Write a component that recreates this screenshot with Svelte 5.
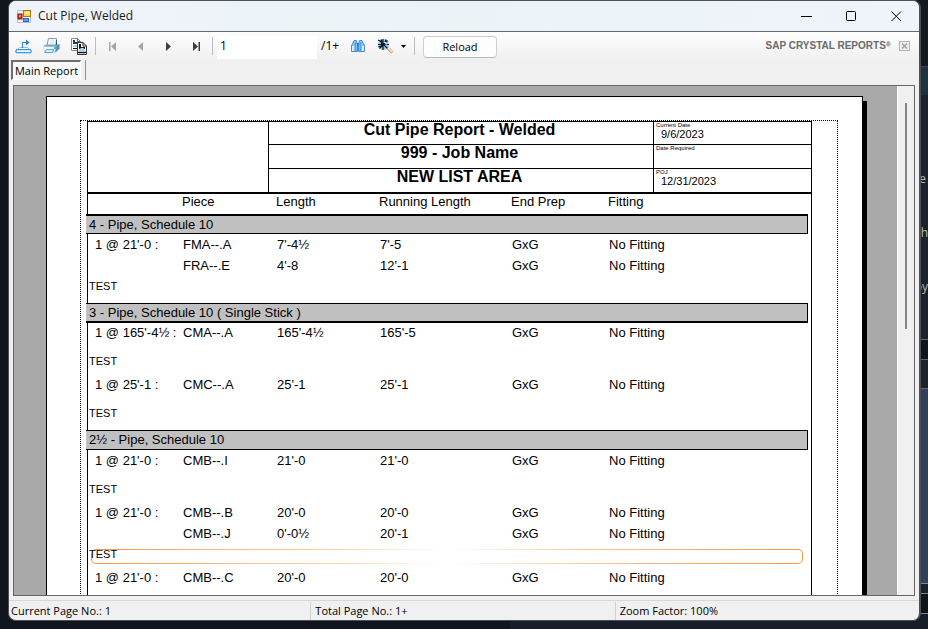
<script>
  const pipe = (piece, length, running) => ({ piece, length, running, prep: 'GxG', fitting: 'No Fitting' });

  const groups = [
    {
      title: '4 - Pipe, Schedule 10',
      rule: 'heavy-top',
      batches: [
        { qty: "1 @ 21'-0 :", rows: [pipe('FMA--.A', "7'-4½", "7'-5"), pipe('FRA--.E', "4'-8", "12'-1")], note: 'TEST' }
      ]
    },
    {
      title: '3 - Pipe, Schedule 10 ( Single Stick )',
      rule: 'heavy-bottom',
      batches: [
        { qty: "1 @ 165'-4½ :", rows: [pipe('CMA--.A', "165'-4½", "165'-5")], note: 'TEST' },
        { qty: "1 @ 25'-1 :", rows: [pipe('CMC--.A', "25'-1", "25'-1")], note: 'TEST' }
      ]
    },
    {
      title: '2½ - Pipe, Schedule 10',
      rule: '',
      batches: [
        { qty: "1 @ 21'-0 :", rows: [pipe('CMB--.I', "21'-0", "21'-0")], note: 'TEST' },
        {
          qty: "1 @ 21'-0 :",
          rows: [pipe('CMB--.B', "20'-0", "20'-0"), pipe('CMB--.J', "0'-0½", "20'-1")],
          note: 'TEST',
          selected: true
        },
        { qty: "1 @ 21'-0 :", rows: [pipe('CMB--.C', "20'-0", "20'-0")] }
      ]
    }
  ];

  let pageNumber = $state('1');
</script>

<div class="desktop">
  <div class="behind">
    <div class="b1"></div>
    <div class="b2"></div>
    <div class="b3"><span>e</span><span>th</span><span>by</span></div>
    <div class="b4"></div>
    <div class="b5"></div>
    <div class="b6"></div>
    <div class="b7"></div>
    <div class="b8"></div>
  </div>

  <main class="window">
    <header class="titlebar">
      <svg class="app-icon" width="15" height="15" viewBox="0 0 15 15">
        <rect x="0.5" y="1.5" width="13" height="12" fill="#eef1f5" stroke="#b9c0c8" />
        <rect x="1" y="5" width="4" height="5" fill="#c8321f" stroke="#8c1d12" stroke-width="1" />
        <rect x="2" y="6" width="2" height="2" fill="#f08a70" />
        <rect x="6.5" y="1.5" width="7" height="6" fill="#fbd44c" stroke="#a87a12" />
        <rect x="8" y="3" width="4" height="2" fill="#fff0a8" />
        <rect x="6.5" y="9.5" width="5" height="3" fill="#5b9cf0" stroke="#2f67c4" />
      </svg>
      <h1>Cut Pipe, Welded</h1>
      <div class="caption">
        <button aria-label="Minimize"><svg width="11" height="11" viewBox="0 0 11 11"><path d="M0 5.5H11" /></svg></button>
        <button aria-label="Maximize"><svg width="11" height="11" viewBox="0 0 11 11"><rect x="0.5" y="0.5" width="9" height="9" rx="1" /></svg></button>
        <button aria-label="Close"><svg width="11" height="11" viewBox="0 0 11 11"><path d="M0.5 0.5L10 10M10 0.5L0.5 10" /></svg></button>
      </div>
    </header>

    <div class="toolbar">
      <button class="tool" aria-label="Export report">
        <svg width="17" height="15" viewBox="0 0 17 15">
          <path d="M4.500 8.500H12.500L15.500 11.500H1.500Z" fill="#fff" stroke="#8fc4f2" />
          <path d="M1.500 10.700H15.500L16.300 12.500L15.500 13.700H1.500L0.700 12.500Z" fill="#fff" stroke="#3399f3" stroke-width="1.200" />
          <path d="M7.500 9V3.500H11" fill="none" stroke="#3a7fb5" />
          <path d="M11 0.500L14.500 3.500L11 6.500Z" fill="#2f7fc4" />
        </svg>
      </button>
      <button class="tool" aria-label="Print report">
        <svg width="17" height="16" viewBox="0 0 17 16">
          <path d="M0.500 8L4 5.500H13L16.500 6V11L12.500 14.500H2.500L0.500 12Z" fill="#b9d0ee" />
          <path d="M5.500 0.500H13.500L13 7H4Z" fill="#f4fbff" stroke="#7b9fae" />
          <path d="M7.500 3H11.500M7 5H11" stroke="#c9e6f0" />
          <path d="M13.500 2V7" stroke="#36576a" />
          <path d="M1 8.500H12.500V12.500H1Z" fill="#f0f6fd" />
          <path d="M12.500 8L16.500 6V10.500L12.500 14.500Z" fill="#5d8bc6" />
          <path d="M3.500 11.500H10.500L9.500 14.500H1.500Z" fill="#c8f4fb" stroke="#6b9fd0" />
          <rect x="11" y="9" width="3" height="2" fill="#35b9c4" />
          <path d="M1 8H13" stroke="#6c8fb9" />
        </svg>
      </button>
      <button class="tool" aria-label="Copy">
        <svg width="17" height="17" viewBox="0 0 17 17">
          <path d="M0.500 0.500H6.500L9.500 3.500V12.500H0.500Z" fill="#fff" stroke="#888" />
          <path d="M6.500 0.500V3.500H9.500" fill="none" stroke="#666" />
          <path d="M2 2H4V4H8V6H2Z" fill="#2a3a48" />
          <rect x="2" y="7" width="5" height="2" fill="#9fd6ee" />
          <path d="M2 10.500H7" stroke="#111" />
          <path d="M6.500 4.500H12L15.500 8V16.500H6.500Z" fill="#fff" stroke="#333" />
          <path d="M12 4.500V8H15.500" fill="none" stroke="#222" />
          <path d="M8 6H10V9H14V11L11 10L8 11Z" fill="#14191f" />
          <rect x="8" y="11" width="6" height="2" fill="#a4d8ee" />
          <path d="M7 14.500H15" stroke="#111" stroke-width="1.500" />
        </svg>
      </button>
      <i class="sep"></i>
      <button class="tool off" aria-label="First page"><svg width="9" height="9" viewBox="0 0 9 9"><path d="M1 0H2.500V9H1ZM8 0V9L3 4.500Z" /></svg></button>
      <button class="tool off" aria-label="Previous page"><svg width="9" height="9" viewBox="0 0 9 9"><path d="M7 0V9L2 4.500Z" /></svg></button>
      <button class="tool" aria-label="Next page"><svg width="9" height="9" viewBox="0 0 9 9"><path d="M2 0V9L7 4.500Z" /></svg></button>
      <button class="tool" aria-label="Last page"><svg width="9" height="9" viewBox="0 0 9 9"><path d="M6.500 0H8V9H6.500ZM1 0V9L6 4.500Z" /></svg></button>
      <i class="sep"></i>
      <input class="page-no" aria-label="Page number" bind:value={pageNumber} />
      <span class="page-total">/1+</span>
      <button class="tool" aria-label="Find text">
        <svg width="14" height="12" viewBox="0 0 14 12">
          <path d="M3 0.500H5.500L6.500 5V11.500H0.500V6Z" fill="#8cc8f7" stroke="#3f8bd4" />
          <path d="M8.500 0.500H11L13.500 6V11.500H7.500V5Z" fill="#8cc8f7" stroke="#3f8bd4" />
          <rect x="1" y="6" width="2" height="5" fill="#f1ecd0" />
          <rect x="11" y="6" width="2" height="5" fill="#f1ecd0" />
          <path d="M4.500 2V11M9.500 2V11" stroke="#4ea3f2" stroke-width="1.500" />
          <rect x="6" y="3" width="2" height="3" fill="#2b7bd0" />
        </svg>
      </button>
      <button class="tool zoom" aria-label="Zoom">
        <svg width="16" height="15" viewBox="0 0 16 15">
          <circle cx="5.500" cy="5.500" r="5.500" fill="#8fd2f5" />
          <path d="M0 1L2 2M5 0V11M0 5.500H11M1.500 1.500L10 10M9.500 1.500L1.500 9.500M3 0.500L4 3M8 0.500L7 3M0.500 8L3 7" stroke="#0c1824" stroke-width="1.200" />
          <rect x="3" y="4" width="4" height="3" fill="#0c1824" />
          <path d="M6 3.500H8V6" stroke="#dff4ff" fill="none" />
          <path d="M9.500 9L14.500 13.500" stroke="#c48f5c" stroke-width="3" />
          <path d="M10 9L14.500 13" stroke="#f9dcb4" stroke-width="1.800" />
        </svg>
        <svg class="caret" width="5" height="3" viewBox="0 0 5 3"><path d="M0 0H5L2.500 3Z" /></svg>
      </button>
      <i class="sep"></i>
      <button class="reload">Reload</button>
      <span class="brand">SAP CRYSTAL REPORTS<sup>®</sup></span>
      <button class="close-view" aria-label="Close view">
        <svg width="11" height="10" viewBox="0 0 11 10">
          <rect x="0.500" y="0.500" width="10" height="9" fill="#ededed" stroke="#b4b4b4" />
          <path d="M3 2.500L8 7.500M8 2.500L3 7.500" stroke="#a2a2a2" stroke-width="1.500" />
        </svg>
      </button>
    </div>

    <nav class="tabs"><button class="tab">Main Report</button></nav>

    <div class="viewer">
      <div class="canvas">
        <article class="paper">
          <div class="margins">
            <div class="frame">
              <div class="heading">
                <div class="logo"></div>
                <div class="titles">
                  <h2>Cut Pipe Report - Welded</h2>
                  <h2>999 - Job Name</h2>
                  <h2>NEW LIST AREA</h2>
                </div>
                <dl class="dates">
                  <div><dt>Current Date</dt><dd>9/6/2023</dd></div>
                  <div><dt>Date Required</dt><dd></dd></div>
                  <div><dt>POJ</dt><dd>12/31/2023</dd></div>
                </dl>
              </div>

              <table>
                <colgroup>
                  <col class="c-qty" /><col class="c-piece" /><col class="c-length" />
                  <col class="c-running" /><col class="c-prep" /><col />
                </colgroup>
                <thead>
                  <tr><th></th><th>Piece</th><th>Length</th><th>Running Length</th><th>End Prep</th><th>Fitting</th></tr>
                </thead>
                {#each groups as group}
                  <tbody>
                    <tr><td class="full" colspan="6"><div class="band {group.rule}">{group.title}</div></td></tr>
                    {#each group.batches as batch}
                      {#each batch.rows as row, i}
                        <tr class="item">
                          <td class="qty">{i === 0 ? batch.qty : ''}</td>
                          <td>{row.piece}</td>
                          <td>{row.length}</td>
                          <td>{row.running}</td>
                          <td>{row.prep}</td>
                          <td>{row.fitting}</td>
                        </tr>
                      {/each}
                      {#if batch.note}
                        <tr>
                          <td class="full" colspan="6">
                            <div class="note" class:single={batch.rows.length === 1}>
                              {#if batch.selected}<i class="selection"></i>{/if}
                              <span>{batch.note}</span>
                            </div>
                          </td>
                        </tr>
                      {/if}
                    {/each}
                    <tr><td class="full" colspan="6"><div class="gap"></div></td></tr>
                  </tbody>
                {/each}
              </table>
            </div>
          </div>
        </article>
      </div>
      <div class="scrollbar"><div class="thumb"></div></div>
    </div>

    <footer class="status">
      <span>Current Page No.: 1</span>
      <span>Total Page No.: 1+</span>
      <span>Zoom Factor: 100%</span>
    </footer>
  </main>
</div>

<style>
  :global(body) { background: #12161e; }
  * { box-sizing: border-box; }
  button { font: inherit; color: inherit; background: none; border: 0; padding: 0; }
  svg { display: block; }
  h1, h2, dl, dd { margin: 0; font-weight: inherit; }

  .desktop {
    position: relative;
    display: flex;
    height: 100vh;
    padding: 0 7px 8px 8px;
    overflow: hidden;
    background: linear-gradient(90deg, #11151d 55%, #171e29 55%);
    font: 12px/16px "Open Sans", "Noto Sans", sans-serif;
    color: #000;
  }

  /* Slice of the application that shows past the window's right edge */
  .behind {
    position: absolute;
    inset: 0 0 0 auto;
    width: 12px;
    display: flex;
    flex-direction: column;
  }
  .b1 { height: 66px; background: #14181f; }
  .b2 { height: 29px; background: #1c3341; border-top: 1px solid #39434d; }
  .b3 { height: 244px; background: #1b222c; color: #b9b9b4; padding-top: 76px; overflow: hidden; }
  .b3 span { display: flex; justify-content: flex-end; height: 54px; padding-right: 2px; }
  .b3 span:not(:first-child) { padding-right: 0; }
  .b4 { height: 20px; background: #11151b; border-top: 1px solid #5b6675; }
  .b5 { height: 29px; background: #1b222a; border-top: 1px solid #5b6675; }
  .b6 { height: 195px; background: #31415a; border-top: 1px solid #5b6675; }
  .b7 { height: 10px; background: #1a212b; border-top: 1px solid #7a8698; }
  .b8 { height: 21px; background: #101318; border: solid #7a8698; border-width: 1px 0; }

  .window {
    position: relative;
    flex: 1;
    min-width: 0;
    display: flex;
    flex-direction: column;
    border: 1px solid #4c4f55;
    border-right-width: 2px;
    border-radius: 8px;
    background: #f0f0f0;
    overflow: hidden;
  }

  .titlebar {
    display: flex;
    align-items: center;
    height: 31px;
    flex: none;
    padding-left: 8px;
    background: linear-gradient(90deg, #eff3f9, #eaf4f7 50%, #eff3fa);
    border-bottom: 1px solid #666a6e;
  }
  .titlebar h1 { margin-left: 6px; font-size: 12px; color: #1a1a1a; }
  .caption { display: flex; margin-left: auto; }
  .caption button { width: 45px; height: 30px; display: grid; place-items: center; }
  .caption svg { fill: none; stroke: #000; }

  .toolbar {
    display: flex;
    align-items: center;
    height: 28px;
    flex: none;
    padding: 0 9px 0 0;
    background: linear-gradient(#fdfdfd, #f0f0f0);
  }
  .tool { width: 28px; height: 28px; display: grid; place-items: center; flex: none; fill: #3d3d3d; }
  .tool.off { fill: #a6a6a6; }
  .sep { width: 1px; height: 18px; background: #bdbdbd; margin: 0 2px; }
  .page-no {
    width: 100px;
    height: 23px;
    margin: 2px 4px 0 2px;
    padding: 0 3px 3px;
    border: 0;
    background: #fff;
    font: inherit;
  }
  .page-total { width: 23px; }
  .tool.zoom { display: flex; align-items: center; width: 40px; gap: 7px; padding-left: 6px; }
  .caret { fill: #000; }
  .reload {
    width: 74px;
    height: 22px;
    margin: 2px 0 0 6px;
    border: 1px solid #cfcfcf;
    border-bottom-color: #b8b8b8;
    border-radius: 4px;
    background: #fdfdfd;
    font-size: 11px;
  }
  .brand { margin-left: auto; font: bold 10px/16px "Liberation Sans", Arial, sans-serif; color: #6b6b6b; white-space: nowrap; }
  .brand sup { font-size: 7px; line-height: 0; vertical-align: 2px; }
  .close-view { margin-left: 8px; }

  .tabs { display: flex; align-items: flex-start; height: 25px; flex: none; padding-left: 2px; }
  .tab {
    width: 70px;
    height: 20px;
    border: 1px solid #fff;
    border-top: 2px solid #6f6f6f;
    border-left: 2px solid #6f6f6f;
    background: #f8f8f8;
    font-size: 11px;
    white-space: nowrap;
  }
  .tabs::after { content: ''; width: 1px; height: 20px; margin-left: 4px; background: #8f8f8f; }

  .viewer {
    display: flex;
    flex: 1;
    min-height: 0;
    margin: 0 4px 4px;
    border: 1px solid #666;
  }
  .canvas { flex: 1; min-width: 0; padding: 10px 34px 0 32px; overflow: hidden; background: #a9a9a9; }
  .paper { border: 1px solid #000; background: #fff; box-shadow: 4px 5px #000; padding: 23px 24px 48px 33px; min-height: 1056px; }
  .margins { border: 1px dotted #000; padding: 0 25px 0 6px; min-height: 980px; }
  .frame { border: 1px solid #000; min-height: 900px; font-family: "Liberation Sans", Arial, sans-serif; }

  .heading { display: flex; border-bottom: 2px solid #000; margin: 0 -1px; padding: 0 1px; }
  .logo { width: 180px; }
  .titles { flex: 1; border-left: 1px solid #000; border-right: 1px solid #000; }
  .titles h2 { height: 23px; padding-right: 3px; font: bold 16px/16px "Liberation Sans", Arial, sans-serif; text-align: center; }
  .titles h2:nth-child(2), .dates div:nth-child(2) { height: 24px; }
  .titles h2:not(:last-child), .dates div:not(:last-child) { border-bottom: 1px solid #000; }
  .dates { width: 157px; }
  .dates div { height: 23px; padding-left: 2px; }
  .dates dt { font-size: 6px; line-height: 6px; }
  .dates dd { padding-left: 5px; font-size: 11px; line-height: 12px; }

  table { width: 100%; table-layout: fixed; border-spacing: 0; font-size: 13px; line-height: 16px; }
  .c-qty { width: 94px; }
  .c-piece { width: 94px; }
  .c-length { width: 103px; }
  .c-running { width: 132px; }
  .c-prep { width: 97px; }
  th { height: 20px; padding: 0; font-weight: normal; text-align: left; white-space: nowrap; vertical-align: top; }
  td { padding: 0 0 0 1px; white-space: nowrap; }
  .full { padding: 0; }
  .band {
    height: 20px;
    margin: 0 3px 0 -2px;
    padding-left: 3px;
    border: solid #000;
    border-width: 1px 1px 1px 0;
    background: #c0c0c0;
    line-height: 18px;
  }
  .heavy-top { border-top-width: 2px; }
  .heavy-bottom { height: 19px; box-shadow: 0 1px #000; }
  .item td { height: 21px; }
  .item .qty { padding: 1px 0 0 7px; }
  .note { position: relative; height: 23px; padding: 2px 0 0 1px; font-size: 11px; }
  .note.single { height: 31px; padding-top: 10px; }
  .note span { position: relative; }
  .selection {
    position: absolute;
    inset: 5px 8px auto 3px;
    height: 15px;
    border: 1px solid transparent;
    border-radius: 5px;
    background:
      linear-gradient(#fff, #fff) padding-box,
      linear-gradient(90deg, #ff9440, #ffd0a6 33%, #fff 50%, #ffb87c 75%, #ff9440) border-box;
  }
  .gap { height: 4px; }

  .scrollbar { width: 17px; border-left: 1px solid #fff; padding: 17px 0 0 7px; background: #f0f0f0; }
  .thumb { width: 2px; height: 46%; background: #858585; }

  .status {
    display: flex;
    height: 20px;
    flex: none;
    border-top: 1px solid #d7d7d7;
    font-size: 11px;
    line-height: 18px;
  }
  .status span { flex: 1; margin-top: 1px; padding-left: 4px; border-left: 1px solid #d0d0d0; }
  .status span:first-child { border-color: transparent; padding-left: 1px; }
</style>
